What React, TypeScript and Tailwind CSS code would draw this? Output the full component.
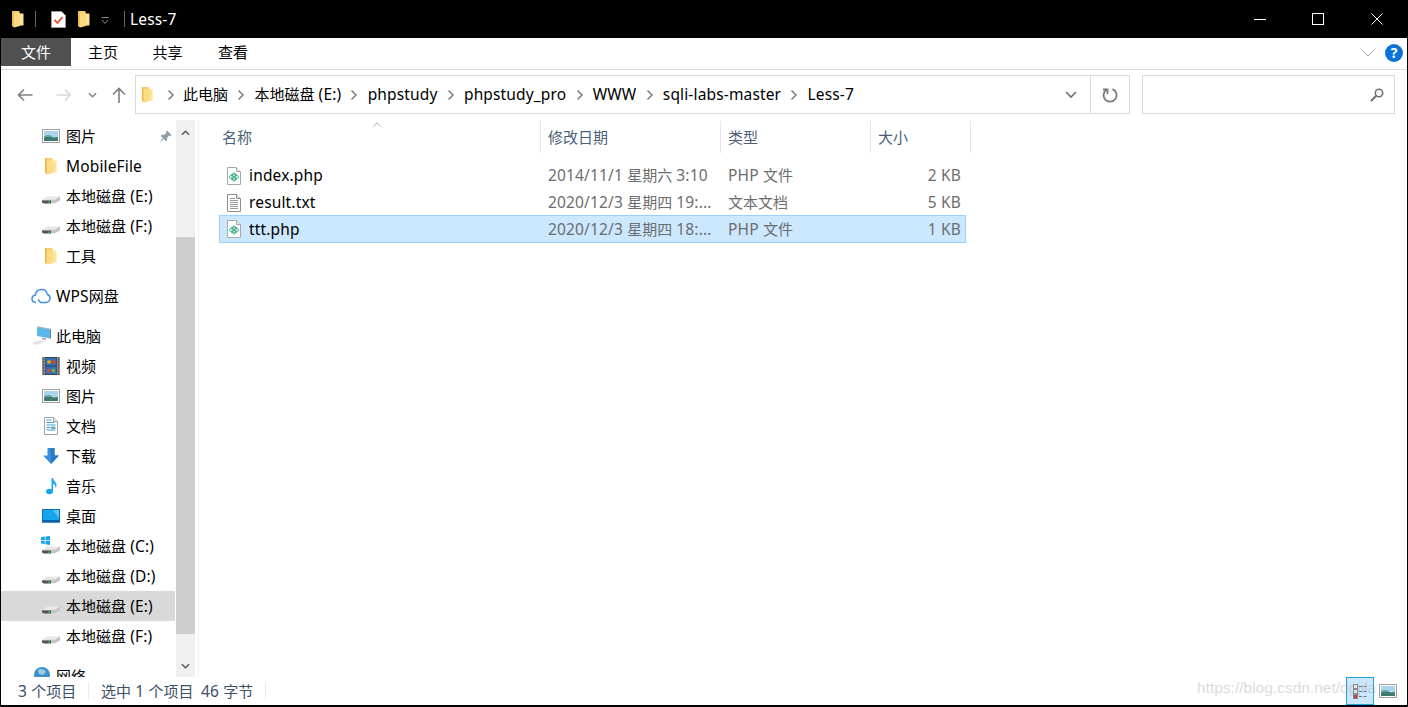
import React from "react";

const FONT = { fontFamily: '"Noto Sans", "Noto Sans CJK SC", sans-serif' };

function T({ children }: { children: string }) {
  const parts = children.split(/([\u4e00-\u9fff]+)/);
  return (
    <>
      {parts.map((p, i) =>
        i % 2 ? (
          <span key={i}>{p}</span>
        ) : (
          <span key={i} className="text-[15.5px] tracking-[0.15px] whitespace-pre">
            {p}
          </span>
        )
      )}
    </>
  );
}

function Folder({ className = "" }: { className?: string }) {
  return (
    <svg viewBox="0 0 14 18" className={className}>
      <path d="M1 1h7l1 2v13l-6 1.500L1 16z" fill="#f5cf6d" />
      <path d="M3 3.500h9.500V15.500H3z" fill="#fde49a" />
      <path d="M3 3.500h6V15.500l-5.500 1.500H3z" fill="#fbdc84" />
      <path d="M1 1h1.500v15H1z" fill="#e8b94f" />
    </svg>
  );
}

function Drive() {
  return (
    <svg viewBox="0 0 18 18" className="w-[18px] h-[18px]">
      <path d="M0 13 5 9.500h13v3l-5 3.500H4z" fill="#e8e8e8" />
      <path d="M0 13l13-.3 5-3.200v4l-5 2.800H1.500L0 15z" fill="#c4c4c4" />
      <path d="M0 13.500h9v3H2l-2-1z" fill="#555" />
      <rect x="6" y="14.500" width="2" height="1.500" fill="#39b54a" />
    </svg>
  );
}

function Picture() {
  return (
    <svg viewBox="0 0 18 14" className="w-[18px] h-[14px]">
      <rect x="0.500" y="0.500" width="17" height="13" fill="#fff" stroke="#a0a0a0" />
      <rect x="2" y="2" width="14" height="10" fill="#a9d4ec" />
      <path d="M2 9c3-3 6-2 8-1s4 0 6 0v4H2z" fill="#3f7a70" />
      <path d="M2 7c3-1 5-1.500 8 0v1H2z" fill="#6ba59c" />
    </svg>
  );
}

function Film() {
  return (
    <svg viewBox="0 0 18 18" className="w-[18px] h-[18px]">
      <rect x="0" y="0" width="18" height="18" fill="#3f3f3f" />
      <rect x="0" y="0" width="3" height="18" fill="#8a8a8a" />
      <rect x="15" y="0" width="3" height="18" fill="#8a8a8a" />
      <path d="M1 2h1M1 5h1M1 8h1M1 11h1M1 14h1M1 17h1M16 2h1M16 5h1M16 8h1M16 11h1M16 14h1M16 17h1" stroke="#2a2a2a" strokeWidth="1.200" />
      <rect x="3.500" y="1" width="11" height="7.500" fill="#2d6fc0" />
      <rect x="3.500" y="9.500" width="11" height="7.500" fill="#2d6fc0" />
      <circle cx="7" cy="5" r="2" fill="#d9a520" />
      <circle cx="11.500" cy="5" r="2" fill="#c94a2c" />
      <circle cx="7" cy="13.500" r="2" fill="#c94a2c" />
      <circle cx="11.500" cy="13.500" r="2" fill="#6fae3a" />
    </svg>
  );
}

function Doc() {
  return (
    <svg viewBox="0 0 18 18" className="w-[18px] h-[18px]">
      <path d="M2.500 0.500h9l4 4v13h-13z" fill="#fff" stroke="#a5a5a5" />
      <path d="M11.500 0.500v4h4" fill="#e6e6e6" stroke="#a5a5a5" />
      <path d="M4.500 3h5M4.500 5.500h8" stroke="#3c9fe0" />
      <path d="M4.500 8h9M4.500 10.500h4M4.500 13h9" stroke="#3c9fe0" />
      <rect x="9" y="9.500" width="4.500" height="2.500" fill="#7aa7b8" />
    </svg>
  );
}

function Download() {
  return (
    <svg viewBox="0 0 18 18" className="w-[18px] h-[18px]">
      <path d="M5.500 1h7v7.500H17L9 17 1 8.500h4.500z" fill="#3a8fdc" />
      <path d="M9 1h3.500v7.500H17L9 17z" fill="#2c78c4" />
    </svg>
  );
}

function Music() {
  return (
    <svg viewBox="0 0 18 18" className="w-[18px] h-[18px]">
      <ellipse cx="7.500" cy="14.500" rx="3.500" ry="2.800" fill="#1ca4ee" />
      <path d="M9.500 1h1.500c.3 3 3.500 4 3.500 7.500 0 1-.3 2-.8 2.800.1-3-1.800-4.300-2.700-4.800V14.500H9.500z" fill="#1ca4ee" />
    </svg>
  );
}

function Desktop() {
  return (
    <svg viewBox="0 0 18 14" className="w-[18px] h-[14px]">
      <rect x="0.500" y="0.500" width="17" height="12.500" fill="#16a5ec" stroke="#0a6fbd" />
      <path d="M11 1h6v8z" fill="#5cc6f5" />
      <rect x="0" y="11" width="18" height="2.500" fill="#0b62a8" />
    </svg>
  );
}

function WinDrive() {
  return (
    <div className="relative w-[18px] h-[18px]">
      <Drive />
      <svg viewBox="0 0 9 9" className="absolute left-[-1px] top-[-1px] w-[9px] h-[9px]">
        <path d="M0 1.200 3.800.6v3.400H0zM4.500.5 9 0v4H4.500zM0 4.700h3.800v3.400L0 7.500zM4.500 4.700H9V9l-4.500-.7z" fill="#12a5ee" />
      </svg>
    </div>
  );
}

function Cloud() {
  return (
    <svg viewBox="0 0 20 16" className="w-[20px] h-[16px]" fill="none">
      <path
        d="M5 14.500C2.500 14.500 1 12.800 1 10.800c0-1.900 1.400-3.300 3.100-3.500C4.700 4 7 1.500 10.500 1.500c3.200 0 5.400 2.300 5.800 5 1.600.4 2.700 1.900 2.700 3.800 0 2.400-1.800 4.200-4.100 4.200H9.500l-2.500-3"
        stroke="#3f8fee"
        strokeWidth="1.500"
      />
    </svg>
  );
}

function PC() {
  return (
    <svg viewBox="0 0 20 20" className="w-[20px] h-[20px]">
      <path d="M6 1l13 2.500v9L6 10z" fill="#5bb8e8" />
      <path d="M6 1l1.500-.5L20 3l-1 .5z" fill="#8a9aa5" />
      <path d="M19 3.500l1-.5v9l-1 .5z" fill="#6e7f8a" />
      <path d="M11 11.500l4 .8v2l-4-.5z" fill="#b8b8b8" />
      <path d="M1 16.500l8-2.500 5 1.500-7 3H2.500z" fill="#e3e3e3" />
    </svg>
  );
}

function Network() {
  return (
    <svg viewBox="0 0 20 18" className="w-[20px] h-[18px]">
      <circle cx="11" cy="8" r="8" fill="#3d93c9" />
      <path d="M7 3c3-2 6-1 8 2l-3 3-4-1z" fill="#9ccde8" />
      <path d="M0 11l7-1v7H0z" fill="#2f86d6" />
      <path d="M10 12l9-1v6h-9z" fill="#2f86d6" />
    </svg>
  );
}

function PhpFile() {
  return (
    <svg viewBox="0 0 14 18" className="w-[14px] h-[18px]">
      <path d="M0.500 0.500h9l4 4v13h-13z" fill="#fff" stroke="#a8a8a8" />
      <path d="M9.500 0.500v4h4" fill="#ececec" stroke="#a8a8a8" />
      <g fill="none" stroke="#35ab85" strokeWidth="1">
        <ellipse cx="7" cy="10" rx="4.500" ry="2.200" />
        <ellipse cx="7" cy="10" rx="2" ry="4.200" />
        <path d="M4 7.500l6 5M10 7.500l-6 5" />
      </g>
    </svg>
  );
}

function TxtFile() {
  return (
    <svg viewBox="0 0 14 18" className="w-[14px] h-[18px]">
      <path d="M0.500 0.500h9l4 4v13h-13z" fill="#fff" stroke="#8e8e8e" />
      <path d="M9.500 0.500v4h4" fill="#ececec" stroke="#8e8e8e" />
      <path d="M3 4.500h5M3 6.500h8M3 8.500h8M3 10.500h8M3 12.500h8M3 14.500h8" stroke="#9a9a9a" />
    </svg>
  );
}

function Chev({ className = "" }: { className?: string }) {
  return (
    <svg viewBox="0 0 8 12" className={`w-[8px] h-[12px] ${className}`} fill="none">
      <path d="M1.500 1.500 6 6l-4.500 4.500" stroke="#808080" strokeWidth="1.600" />
    </svg>
  );
}

type NavItem = { label: string; icon: React.ReactNode; top?: boolean; selected?: boolean; pin?: boolean; gap?: boolean };

const FolderNav = <Folder className="w-[14px] h-[18px]" />;

const nav: NavItem[] = [
  { label: "图片", icon: <Picture />, pin: true },
  { label: "MobileFile", icon: FolderNav },
  { label: "本地磁盘 (E:)", icon: <Drive /> },
  { label: "本地磁盘 (F:)", icon: <Drive /> },
  { label: "工具", icon: FolderNav },
  { label: "WPS网盘", icon: <Cloud />, top: true, gap: true },
  { label: "此电脑", icon: <PC />, top: true, gap: true },
  { label: "视频", icon: <Film /> },
  { label: "图片", icon: <Picture /> },
  { label: "文档", icon: <Doc /> },
  { label: "下载", icon: <Download /> },
  { label: "音乐", icon: <Music /> },
  { label: "桌面", icon: <Desktop /> },
  { label: "本地磁盘 (C:)", icon: <WinDrive /> },
  { label: "本地磁盘 (D:)", icon: <Drive /> },
  { label: "本地磁盘 (E:)", icon: <Drive />, selected: true },
  { label: "本地磁盘 (F:)", icon: <Drive /> },
  { label: "网络", icon: <Network />, top: true, gap: true },
];

const crumbs = ["此电脑", "本地磁盘 (E:)", "phpstudy", "phpstudy_pro", "WWW", "sqli-labs-master", "Less-7"];

const files = [
  { name: "index.php", date: "2014/11/1 星期六 3:10", type: "PHP 文件", size: "2 KB", icon: <PhpFile /> },
  { name: "result.txt", date: "2020/12/3 星期四 19:...", type: "文本文档", size: "5 KB", icon: <TxtFile /> },
  { name: "ttt.php", date: "2020/12/3 星期四 18:...", type: "PHP 文件", size: "1 KB", icon: <PhpFile />, selected: true },
];

export default function App() {
  return (
    <div
      style={FONT}
      className="relative w-[1408px] h-[707px] flex flex-col overflow-hidden bg-white border-x border-b-2 border-black text-[15px] text-black leading-[20px]"
    >
      {/* title bar */}
      <div className="h-[38px] shrink-0 bg-black flex items-center text-white">
        <Folder className="ml-[10px] w-[14px] h-[18px]" />
        <div className="ml-[10px] w-px h-[16px] bg-[#6a6a6a]" />
        <svg viewBox="0 0 15 17" className="ml-[15px] w-[15px] h-[17px]">
          <path d="M0.500 0.500h10l4 4v12h-14z" fill="#fff" stroke="#9a9a9a" />
          <path d="M3.500 9l3 3 5-6" fill="none" stroke="#e2532a" strokeWidth="1.800" />
        </svg>
        <Folder className="ml-[11px] w-[14px] h-[18px]" />
        <svg viewBox="0 0 8 8" className="ml-[10px] mt-[4px] w-[8px] h-[8px]" fill="none">
          <path d="M0.500 0.500h7M1 3l3 3.500L7 3" stroke="#8a8a8a" />
        </svg>
        <div className="ml-[15px] w-px h-[16px] bg-[#6a6a6a]" />
        <span className="ml-[5px]">
          <T>Less-7</T>
        </span>
        <div className="ml-auto mr-[1px] flex items-center">
          <div className="w-[58px] flex justify-center">
            <div className="w-[12px] h-px bg-white" />
          </div>
          <div className="w-[58px] flex justify-center">
            <div className="w-[12px] h-[12px] border border-white" />
          </div>
          <div className="w-[59px] flex justify-center">
            <svg viewBox="0 0 12 12" className="w-[12px] h-[12px]" fill="none">
              <path d="M0.500 0.500l11 11M11.500 0.500l-11 11" stroke="#fff" />
            </svg>
          </div>
        </div>
      </div>

      {/* ribbon tabs */}
      <div className="h-[32px] shrink-0 flex border-b border-[#dadada]">
        <div className="h-[28px] w-[70px] bg-[#505050] text-white flex items-center justify-center">文件</div>
        <div className="h-[28px] w-[64px] flex items-center justify-center">主页</div>
        <div className="h-[28px] w-[65px] flex items-center justify-center">共享</div>
        <div className="h-[28px] w-[66px] flex items-center justify-center">查看</div>
        <div className="ml-auto h-[30px] flex items-center pr-[4px]">
          <svg viewBox="0 0 14 8" className="w-[14px] h-[8px] mr-[10px]" fill="none">
            <path d="M1 1l6 6 6-6" stroke="#a8a8a8" />
          </svg>
          <div className="w-[18px] h-[18px] rounded-full bg-[#0a74d6] text-white text-[14px] font-bold flex items-center justify-center">?</div>
        </div>
      </div>

      {/* address row */}
      <div className="h-[50px] shrink-0 flex items-start pt-[5px]">
        <div className="h-[39px] flex items-center">
          <svg viewBox="0 0 16 14" className="ml-[16px] w-[16px] h-[14px]" fill="none">
            <path d="M15.500 7H1.500M7 1.500 1.500 7 7 12.500" stroke="#808080" strokeWidth="1.600" />
          </svg>
          <svg viewBox="0 0 16 14" className="ml-[23px] w-[16px] h-[14px]" fill="none">
            <path d="M.5 7h14M9 1.500 14.500 7 9 12.500" stroke="#d8d8d8" strokeWidth="1.600" />
          </svg>
          <svg viewBox="0 0 10 6" className="ml-[16px] w-[9px] h-[6px]" fill="none">
            <path d="M1 1l4 4 4-4" stroke="#808080" strokeWidth="1.500" />
          </svg>
          <svg viewBox="0 0 14 16" className="ml-[15px] w-[14px] h-[16px]" fill="none">
            <path d="M7 16V1.500M1 7.500 7 1.500l6 6" stroke="#808080" strokeWidth="1.600" />
          </svg>
        </div>
        <div className="ml-[9px] w-[995px] h-[39px] border border-[#d9d9d9] flex items-center">
          <Folder className="ml-[5px] w-[13px] h-[17px]" />
          <div className="w-[29px] flex justify-center pl-[5px] shrink-0">
            <Chev />
          </div>
          {crumbs.map((c, i) => (
            <React.Fragment key={i}>
              <span className="whitespace-nowrap pb-[2px]">
                <T>{c}</T>
              </span>
              {i < crumbs.length - 1 && (
                <div className="w-[26.4px] flex justify-center shrink-0">
                  <Chev />
                </div>
              )}
            </React.Fragment>
          ))}
          <div className="ml-auto w-[39px] h-full flex items-center justify-center">
            <svg viewBox="0 0 12 8" className="w-[12px] h-[8px]" fill="none">
              <path d="M1 1l5 5 5-5" stroke="#707070" strokeWidth="1.600" />
            </svg>
          </div>
          <div className="w-[39px] h-full border-l border-[#d9d9d9] flex items-center justify-center">
            <svg viewBox="0 0 16 16" className="w-[16px] h-[16px]" fill="none">
              <path d="M10.500 2.200A6.500 6.500 0 1 1 4.600 2.700" stroke="#7a7a7a" strokeWidth="1.800" />
              <path d="M1 2.500h4.500V7" stroke="#7a7a7a" strokeWidth="1.800" />
            </svg>
          </div>
        </div>
        <div className="ml-[12px] w-[253px] h-[39px] border border-[#d9d9d9] flex items-center justify-end pr-[10px]">
          <svg viewBox="0 0 14 14" className="w-[14px] h-[14px]" fill="none">
            <circle cx="9" cy="5" r="3.700" stroke="#707070" strokeWidth="1.600" />
            <path d="M6.200 7.800 1 13" stroke="#707070" strokeWidth="2" />
          </svg>
        </div>
      </div>

      {/* main */}
      <div className="flex-1 min-h-0 flex">
        <div className="w-[174px] shrink-0 pt-px overflow-hidden">
          {nav.map((n, i) => (
            <div
              key={i}
              className={`h-[30px] flex items-center shrink-0 ${n.gap ? "mt-[10px]" : ""} ${n.selected ? "bg-[#d9d9d9]" : ""}`}
            >
              <div className={`flex items-center justify-center shrink-0 ${n.top ? "ml-[30px] w-[20px]" : "ml-[41px] w-[18px]"}`}>
                {n.icon}
              </div>
              <span className={`whitespace-nowrap ${n.top ? "ml-[5px]" : "ml-[6px]"}`}>
                <T>{n.label}</T>
              </span>
              {n.pin && (
                <svg viewBox="0 0 14 14" className="ml-auto mr-[3px] w-[13px] h-[13px]">
                  <path d="M8.500 0.500 13.500 5.500 12.300 6.500 11 6 8.500 8.500 8.800 11 7.500 12 2 6.500 3 5.200 5.500 5.500 8 3 7.500 1.700z" fill="#8f9ba5" />
                  <path d="M4 9 .5 13.500 5 10z" fill="#8f9ba5" />
                </svg>
              )}
            </div>
          ))}
        </div>

        <div className="ml-px w-[19px] shrink-0 bg-[#f0f0f0] flex flex-col">
          <div className="h-[21px] mt-[2px] flex items-center justify-center">
            <svg viewBox="0 0 10 6" className="w-[9px] h-[6px]" fill="none">
              <path d="M1 5l4-4 4 4" stroke="#555" strokeWidth="1.600" />
            </svg>
          </div>
          <div className="mt-[94px] h-[397px] bg-[#cdcdcd]" />
          <div className="mt-auto h-[22px] flex items-center justify-center">
            <svg viewBox="0 0 10 6" className="w-[9px] h-[6px]" fill="none">
              <path d="M1 1l4 4 4-4" stroke="#555" strokeWidth="1.600" />
            </svg>
          </div>
        </div>

        <div className="ml-[3px] flex-1 min-w-0 border-l border-[#f0f0f0] relative">
          <svg viewBox="0 0 10 6" className="absolute left-[173px] top-[2px] w-[10px] h-[5px]" fill="none">
            <path d="M.5 5.500 5 1l4.500 4.500" stroke="#a0a0a0" />
          </svg>
          <div className="flex h-[33px] pt-px text-[#4c607a]">
            <div className="w-[342px] h-[32px] border-r border-[#e5e5e5] flex items-center pl-[23px]">名称</div>
            <div className="w-[180px] h-[32px] border-r border-[#e5e5e5] flex items-center pl-[7px]">修改日期</div>
            <div className="w-[150px] h-[32px] border-r border-[#e5e5e5] flex items-center pl-[7px]">类型</div>
            <div className="w-[100px] h-[32px] border-r border-[#e5e5e5] flex items-center pl-[7px]">大小</div>
          </div>
          <div className="pt-[9px] pl-[20px]">
            {files.map((f) => (
              <div
                key={f.name}
                className={`w-[747px] flex items-center border ${
                  f.selected ? "h-[28px] -mt-px bg-[#cce8ff] border-[#99d1ff]" : "h-[27px] border-transparent"
                }`}
              >
                <div className="w-[328px] flex items-center shrink-0">
                  <div className="ml-[7px] shrink-0 flex">{f.icon}</div>
                  <span className={`ml-[8px] ${f.selected ? "" : "pb-[2px]"}`}>
                    <T>{f.name}</T>
                  </span>
                </div>
                <span className={`w-[180px] shrink-0 text-[#6d6d6d] whitespace-nowrap ${f.selected ? "" : "pb-[2px]"}`}>
                  <T>{f.date}</T>
                </span>
                <span className={`w-[150px] shrink-0 text-[#6d6d6d] ${f.selected ? "" : "pb-[2px]"}`}>
                  <T>{f.type}</T>
                </span>
                <span className={`w-[83px] shrink-0 text-right text-[#6d6d6d] ${f.selected ? "" : "pb-[2px]"}`}>
                  <T>{f.size}</T>
                </span>
              </div>
            ))}
          </div>
        </div>
      </div>

      {/* status */}
      <div className="h-[28px] shrink-0 flex items-center text-[#3c4f66]">
        <span className="ml-[17px] w-[70px] whitespace-nowrap">
          <T>3 个项目</T>
        </span>
        <div className="h-[18px] w-px bg-[#ececec]" />
        <span className="ml-[12px] w-[100px] whitespace-nowrap">
          <T>选中 1 个项目</T>
        </span>
        <span className="w-[64px] whitespace-nowrap">
          <T>46 字节</T>
        </span>
        <div className="h-[18px] w-px bg-[#ececec]" />
        <div className="ml-auto mr-[10px] flex items-center">
          <div className="w-[28px] h-[28px] bg-[#cce8ff] border border-[#26a0da] flex items-center justify-center">
            <svg viewBox="0 0 16 16" className="w-[16px] h-[16px]" fill="none">
              <rect x="1.500" y="1.500" width="4" height="4" fill="#fff" stroke="#888" />
              <rect x="1.500" y="6.500" width="4" height="4" fill="#fff" stroke="#888" />
              <rect x="1.500" y="11.500" width="4" height="4" fill="#d04030" stroke="#888" />
              <path d="M7 3.500h3M11.500 3.500h3M7 8.500h3M11.500 8.500h3M7 13.500h3M11.500 13.500h3" stroke="#777" />
            </svg>
          </div>
          <div className="ml-[5px]">
            <Picture />
          </div>
        </div>
      </div>

      {/* watermark */}
      <span
        className="absolute left-[1196px] top-[678px] text-[15.5px] whitespace-nowrap text-[#9a9a9a] opacity-35"
        style={{ fontFamily: '"Liberation Sans", sans-serif' }}
      >
        https://blog.csdn.net/dgjila
      </span>
    </div>
  );
}
